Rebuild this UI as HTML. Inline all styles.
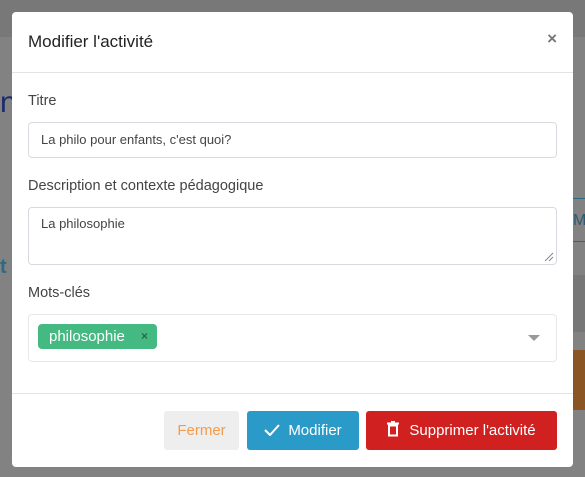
<!DOCTYPE html>
<html><head><meta charset="utf-8"><style>
*{box-sizing:border-box;margin:0;padding:0}
body{width:585px;height:477px;overflow:hidden;background:#787878;font-family:"Liberation Sans",sans-serif;position:relative}
.bg{position:absolute}
.modal{position:absolute;left:12px;top:12px;width:561px;height:455px;background:#fff;border-radius:4px}
.hd{height:61px;border-bottom:1px solid #e3e3e3;position:relative}
.hd h1{position:absolute;left:16px;top:20px;font-size:17px;font-weight:normal;color:#222}
.x{position:absolute;right:16px;top:17px;font-size:17px;color:#777;font-weight:bold}
.lbl{position:absolute;left:16px;font-size:14.5px;color:#444}
.inp{position:absolute;left:16px;width:529px;border:1px solid #d7dbe0;border-radius:4px;font-size:13px;color:#444;padding:0 12px}
.ft{position:absolute;left:0;top:381px;width:561px;border-top:1px solid #e3e3e3}
.btn{position:absolute;top:399px;height:39px;border-radius:3px;font-size:15px;line-height:39px;color:#fff;text-align:center}
</style></head><body>
<div class="bg" style="left:0;top:37px;width:585px;height:440px;background:#828282"></div>
<div class="bg" style="left:0;top:88px;width:12px;height:30px;font-size:30px;color:#1a2a6e;line-height:30px">n</div>
<div class="bg" style="left:0;top:256px;width:12px;color:#2a6a85;font-weight:bold;font-size:20px">t</div>
<div class="bg" style="left:573px;top:198px;width:12px;height:44px;border-top:1px solid #2a6a85;border-bottom:1px solid #2a6a85;color:#2a5a75;font-size:16px;line-height:44px">M</div>
<div class="bg" style="left:573px;top:275px;width:12px;height:57px;background:#777"></div>
<div class="bg" style="left:573px;top:350px;width:12px;height:60px;background:#8a5522"></div>
<div class="modal">
<div class="hd"><h1>Modifier l'activité</h1><span class="x">×</span></div>
<div class="lbl" style="top:81px">Titre</div>
<div class="inp" style="top:110px;height:36px;line-height:34px">La philo pour enfants, c'est quoi?</div>
<div class="lbl" style="top:166px">Description et contexte pédagogique</div>
<div class="inp" style="top:195px;height:58px;padding-top:8px">La philosophie
<svg style="position:absolute;right:2px;bottom:2px" width="10" height="10"><path d="M1 9L9 1M5 9L9 5" stroke="#888" stroke-width="1"/></svg></div>
<div class="lbl" style="top:273px">Mots-clés</div>
<div class="inp" style="top:302px;height:48px;border-color:#e6e8ea">
<div style="position:absolute;left:9px;top:9px;width:119px;height:25px;background:#44b981;border-radius:4px;color:#fff;font-size:15px;line-height:25px;padding-left:11px">philosophie<span style="position:absolute;right:9px;font-size:12px;color:#2a6a4a;font-weight:bold">×</span></div>
<div style="position:absolute;right:16px;top:20px;border-left:6px solid transparent;border-right:6px solid transparent;border-top:6px solid #999"></div>
</div>
<div class="ft"></div>
<div class="btn" style="left:152px;width:75px;background:#eee;color:#f39c4a">Fermer</div>
<div class="btn" style="left:235px;width:112px;background:#2a9bc8"><svg width="16" height="12" style="vertical-align:-1px;margin-right:8px"><path d="M1 6l5 5L15 1" stroke="#fff" stroke-width="2" fill="none"/></svg>Modifier</div>
<div class="btn" style="left:354px;width:191px;background:#d0201f"><svg width="12" height="16" style="vertical-align:-2px;margin-right:10px"><path d="M0 2.5h12M4 1h4" stroke="#fff" stroke-width="2"/><rect x="2" y="4.5" width="8" height="10" fill="none" stroke="#fff" stroke-width="2"/></svg>Supprimer l'activité</div>
</div>
</body></html>
